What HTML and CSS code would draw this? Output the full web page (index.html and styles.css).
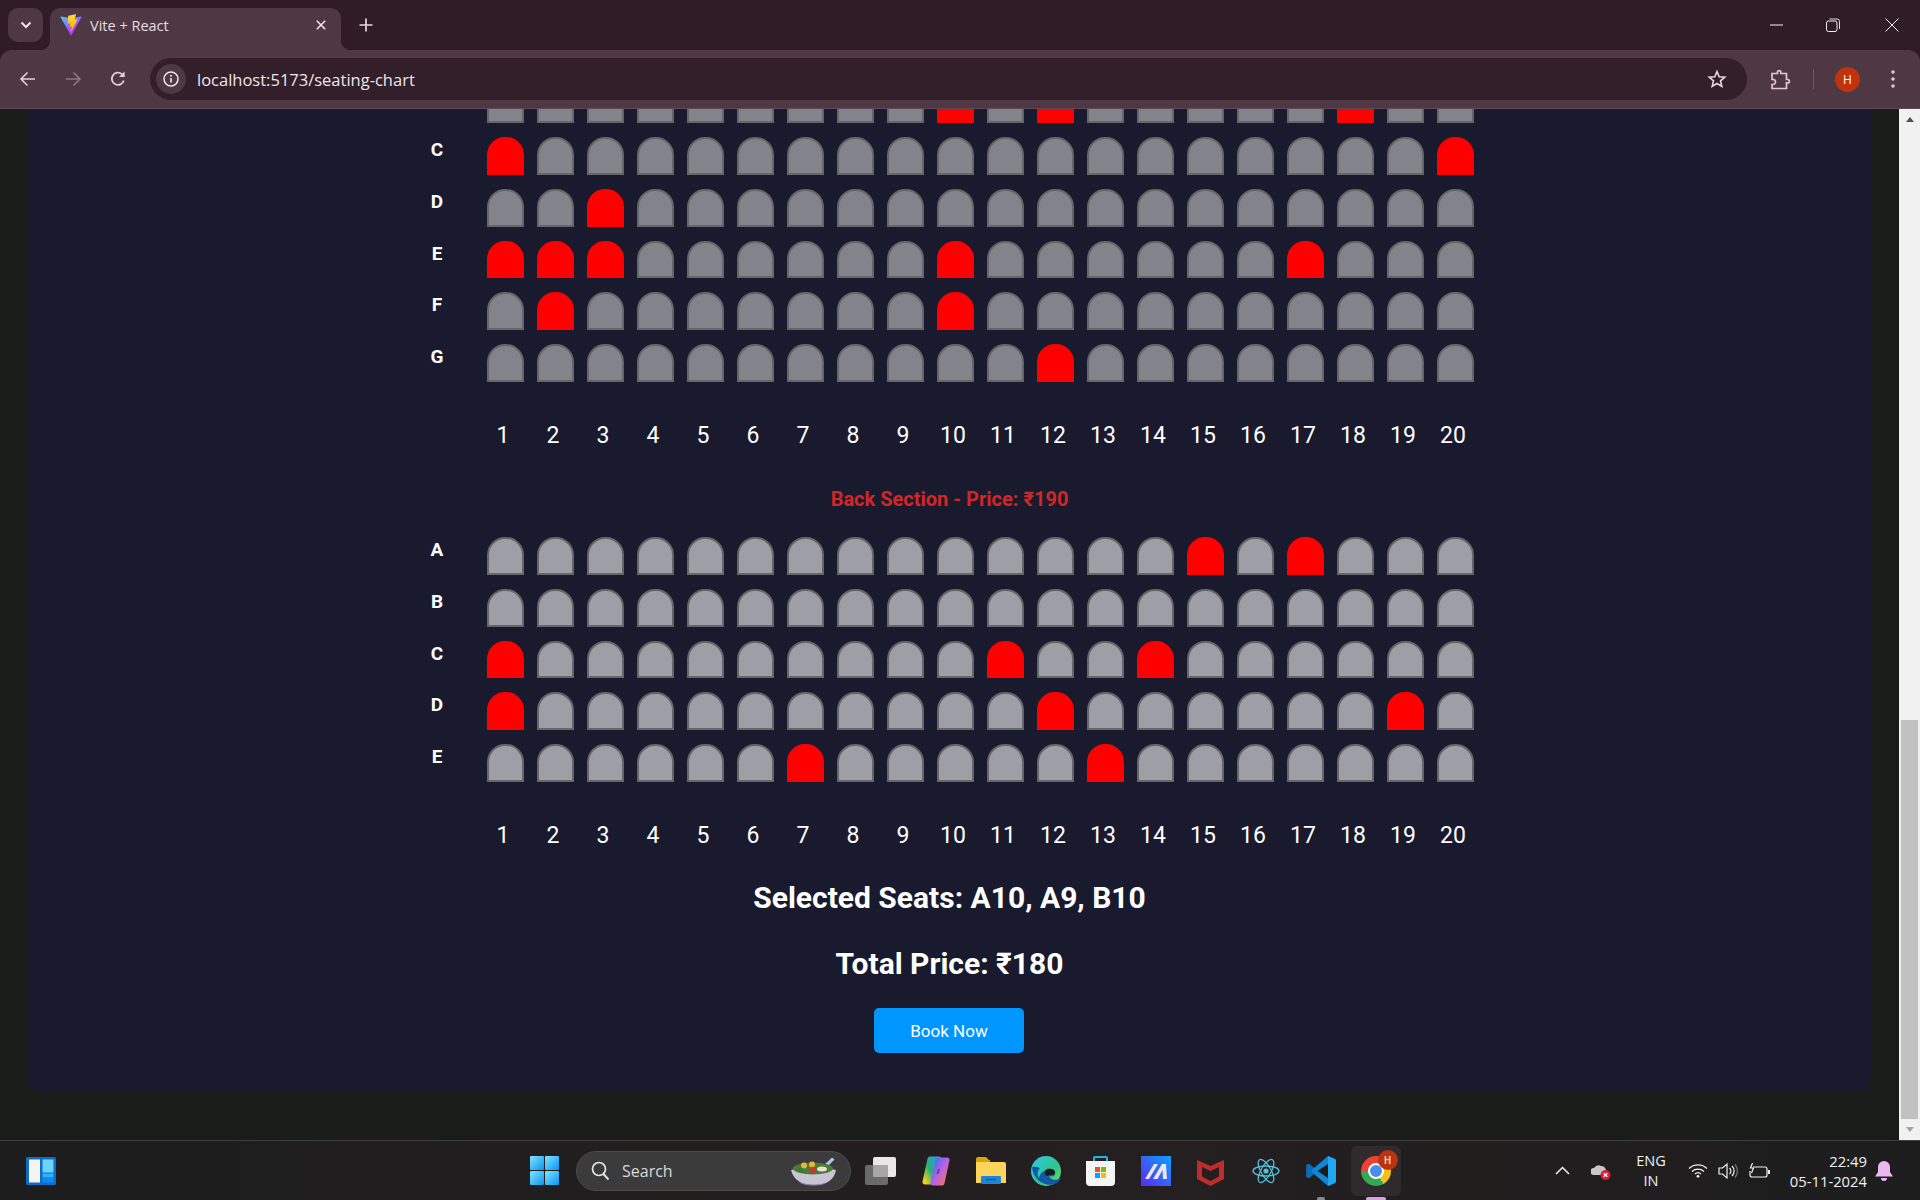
FILE: index.html
```html
<!DOCTYPE html>
<html lang="en">
<head>
<meta charset="utf-8">
<title>Vite + React</title>
<link rel="stylesheet" href="styles.css">
</head>
<body>
<header class="browser">
  <div class="tabstrip">
    <div class="tab-search"><svg width="12" height="8" viewBox="0 0 12 8"><path d="M1.5 1.5 6 6l4.5-4.5" fill="none" stroke="#f0e4ea" stroke-width="2"/></svg></div>
    <div class="tab">
      <svg class="favicon" width="22" height="22" viewBox="0 0 410 404"><defs><linearGradient id="vg1" x1="6" y1="33" x2="235" y2="344" gradientUnits="userSpaceOnUse"><stop offset="0" stop-color="#41D1FF"/><stop offset="1" stop-color="#BD34FE"/></linearGradient><linearGradient id="vg2" x1="194" y1="8" x2="236" y2="300" gradientUnits="userSpaceOnUse"><stop offset="0" stop-color="#FFEA83"/><stop offset=".08" stop-color="#FFDD35"/><stop offset="1" stop-color="#FFA800"/></linearGradient></defs><path fill="url(#vg1)" d="M399.641 59.5246L215.643 388.545C211.844 395.338 202.084 395.378 198.228 388.618L10.5817 59.5563C6.38087 52.1896 12.6802 43.2665 21.0281 44.7586L205.223 77.6824C206.398 77.8924 207.601 77.8904 208.776 77.6763L389.119 44.8058C397.439 43.2894 403.768 52.1434 399.641 59.5246Z"/><path fill="url(#vg2)" d="M292.965 1.5744L156.801 28.2552C154.563 28.6937 152.906 30.5903 152.771 32.8664L144.395 174.33C144.198 177.662 147.258 180.248 150.51 179.498L188.42 170.749C191.967 169.931 195.172 173.055 194.443 176.622L183.18 231.775C182.422 235.487 185.907 238.661 189.532 237.56L212.947 230.446C216.577 229.344 220.065 232.527 219.297 236.242L201.398 322.875C200.278 328.294 207.486 331.249 210.492 326.603L212.5 323.5L323.454 102.072C325.312 98.3645 322.108 94.137 318.036 94.9228L279.014 102.454C275.347 103.161 272.227 99.746 273.262 96.1583L298.731 7.86689C299.767 4.27314 296.636 0.855181 292.965 1.5744Z"/></svg>
      <span class="tab-title">Vite + React</span>
      <svg class="tab-close" width="10" height="10" viewBox="0 0 10 10"><path d="M.8.8l8.4 8.4M9.2.8.8 9.2" stroke="#f0e4ea" stroke-width="1.6"/></svg>
    </div>
    <svg class="new-tab" width="14" height="14" viewBox="0 0 14 14"><path d="M7 .5v13M.5 7h13" stroke="#e8d8e0" stroke-width="1.7"/></svg>
    <div class="window-controls">
      <svg width="14" height="2" viewBox="0 0 14 2"><path d="M0 1h13" stroke="#f4f0f2" stroke-width="1"/></svg>
      <svg width="14" height="14" viewBox="0 0 14 14"><rect x=".5" y="3" width="10.5" height="10.5" rx="2" fill="none" stroke="#f4f0f2"/><path d="M3.5 1h7.5A2.5 2.5 0 0 1 13.500 3.500V11" fill="none" stroke="#f4f0f2" stroke-width=".9"/></svg>
      <svg class="win-close" width="14" height="14" viewBox="0 0 14 14"><path d="M.5.500l13 13M13.500.500l-13 13" stroke="#f4f0f2" stroke-width="1"/></svg>
    </div>
  </div>
  <div class="toolbar">
    <svg class="nav-icon" width="18" height="16" viewBox="0 0 18 16"><path d="M16 8H2.500M8.500 1.500 2 8l6.500 6.500" fill="none" stroke="#e3cfd9" stroke-width="1.600"/></svg>
    <svg class="nav-icon" width="18" height="16" viewBox="0 0 18 16"><path d="M2 8h13.500M9.500 1.500 16 8l-6.500 6.500" fill="none" stroke="#8c7781" stroke-width="1.600"/></svg>
    <svg class="nav-icon" width="18" height="18" viewBox="0 0 18 18"><path d="M14.800 10.500A6.100 6.100 0 1 1 13 4.200L15 6" fill="none" stroke="#e3cfd9" stroke-width="1.800"/><path d="M15.600 1.500v5.600H10" fill="#e3cfd9"/></svg>
    <div class="omnibox">
      <div class="site-info"><svg width="16" height="16" viewBox="0 0 16 16"><circle cx="8" cy="8" r="7" fill="none" stroke="#f0e4ea" stroke-width="1.500"/><path d="M8 7v4.500" stroke="#f0e4ea" stroke-width="1.700"/><circle cx="8" cy="4.800" r="1" fill="#f0e4ea"/></svg></div>
      <span class="url">localhost:5173/seating-chart</span>
      <svg class="star" width="20" height="20" viewBox="0 0 20 20"><path d="M10 2.500l2.200 5.200 5.600.5-4.300 3.700 1.300 5.500L10 14.500l-4.800 2.900 1.300-5.500L2.200 8.200l5.600-.5z" fill="none" stroke="#e8d8e0" stroke-width="1.600"/></svg>
    </div>
    <svg class="puzzle" width="21" height="21" viewBox="0 0 21 21"><path d="M2 4.500h5.500V3.300a1.700 1.700 0 0 1 3.400 0v1.200h5.600v6h1.200a1.700 1.700 0 0 1 0 3.400h-1.200v5.600H2V15.500h1a2.500 2.500 0 0 0 0-5H2z" fill="none" stroke="#e3c5d3" stroke-width="1.700"/></svg>
    <div class="toolbar-divider"></div>
    <div class="avatar">H</div>
    <svg class="kebab" width="4" height="18" viewBox="0 0 4 18"><circle cx="2" cy="2" r="1.800" fill="#e3c5d3"/><circle cx="2" cy="9" r="1.800" fill="#e3c5d3"/><circle cx="2" cy="16" r="1.800" fill="#e3c5d3"/></svg>
  </div>
</header>

<div class="viewport">
  <main class="scroll-area">
    <section class="card">
      <div class="row clipped"><span class="row-label"></span><div class="seats"><i class="seat"></i><i class="seat"></i><i class="seat"></i><i class="seat"></i><i class="seat"></i><i class="seat"></i><i class="seat"></i><i class="seat"></i><i class="seat"></i><i class="seat taken"></i><i class="seat"></i><i class="seat taken"></i><i class="seat"></i><i class="seat"></i><i class="seat"></i><i class="seat"></i><i class="seat"></i><i class="seat taken"></i><i class="seat"></i><i class="seat"></i></div></div>
      <div class="row"><span class="row-label">C</span><div class="seats"><i class="seat taken"></i><i class="seat"></i><i class="seat"></i><i class="seat"></i><i class="seat"></i><i class="seat"></i><i class="seat"></i><i class="seat"></i><i class="seat"></i><i class="seat"></i><i class="seat"></i><i class="seat"></i><i class="seat"></i><i class="seat"></i><i class="seat"></i><i class="seat"></i><i class="seat"></i><i class="seat"></i><i class="seat"></i><i class="seat taken"></i></div></div>
      <div class="row"><span class="row-label">D</span><div class="seats"><i class="seat"></i><i class="seat"></i><i class="seat taken"></i><i class="seat"></i><i class="seat"></i><i class="seat"></i><i class="seat"></i><i class="seat"></i><i class="seat"></i><i class="seat"></i><i class="seat"></i><i class="seat"></i><i class="seat"></i><i class="seat"></i><i class="seat"></i><i class="seat"></i><i class="seat"></i><i class="seat"></i><i class="seat"></i><i class="seat"></i></div></div>
      <div class="row"><span class="row-label">E</span><div class="seats"><i class="seat taken"></i><i class="seat taken"></i><i class="seat taken"></i><i class="seat"></i><i class="seat"></i><i class="seat"></i><i class="seat"></i><i class="seat"></i><i class="seat"></i><i class="seat taken"></i><i class="seat"></i><i class="seat"></i><i class="seat"></i><i class="seat"></i><i class="seat"></i><i class="seat"></i><i class="seat taken"></i><i class="seat"></i><i class="seat"></i><i class="seat"></i></div></div>
      <div class="row"><span class="row-label">F</span><div class="seats"><i class="seat"></i><i class="seat taken"></i><i class="seat"></i><i class="seat"></i><i class="seat"></i><i class="seat"></i><i class="seat"></i><i class="seat"></i><i class="seat"></i><i class="seat taken"></i><i class="seat"></i><i class="seat"></i><i class="seat"></i><i class="seat"></i><i class="seat"></i><i class="seat"></i><i class="seat"></i><i class="seat"></i><i class="seat"></i><i class="seat"></i></div></div>
      <div class="row"><span class="row-label">G</span><div class="seats"><i class="seat"></i><i class="seat"></i><i class="seat"></i><i class="seat"></i><i class="seat"></i><i class="seat"></i><i class="seat"></i><i class="seat"></i><i class="seat"></i><i class="seat"></i><i class="seat"></i><i class="seat taken"></i><i class="seat"></i><i class="seat"></i><i class="seat"></i><i class="seat"></i><i class="seat"></i><i class="seat"></i><i class="seat"></i><i class="seat"></i></div></div>
      <div class="numbers"><span>1</span><span>2</span><span>3</span><span>4</span><span>5</span><span>6</span><span>7</span><span>8</span><span>9</span><span>10</span><span>11</span><span>12</span><span>13</span><span>14</span><span>15</span><span>16</span><span>17</span><span>18</span><span>19</span><span>20</span></div>

      <h3 class="section-title">Back Section - Price: ₹190</h3>
      <div class="row back"><span class="row-label">A</span><div class="seats"><i class="seat"></i><i class="seat"></i><i class="seat"></i><i class="seat"></i><i class="seat"></i><i class="seat"></i><i class="seat"></i><i class="seat"></i><i class="seat"></i><i class="seat"></i><i class="seat"></i><i class="seat"></i><i class="seat"></i><i class="seat"></i><i class="seat taken"></i><i class="seat"></i><i class="seat taken"></i><i class="seat"></i><i class="seat"></i><i class="seat"></i></div></div>
      <div class="row back"><span class="row-label">B</span><div class="seats"><i class="seat"></i><i class="seat"></i><i class="seat"></i><i class="seat"></i><i class="seat"></i><i class="seat"></i><i class="seat"></i><i class="seat"></i><i class="seat"></i><i class="seat"></i><i class="seat"></i><i class="seat"></i><i class="seat"></i><i class="seat"></i><i class="seat"></i><i class="seat"></i><i class="seat"></i><i class="seat"></i><i class="seat"></i><i class="seat"></i></div></div>
      <div class="row back"><span class="row-label">C</span><div class="seats"><i class="seat taken"></i><i class="seat"></i><i class="seat"></i><i class="seat"></i><i class="seat"></i><i class="seat"></i><i class="seat"></i><i class="seat"></i><i class="seat"></i><i class="seat"></i><i class="seat taken"></i><i class="seat"></i><i class="seat"></i><i class="seat taken"></i><i class="seat"></i><i class="seat"></i><i class="seat"></i><i class="seat"></i><i class="seat"></i><i class="seat"></i></div></div>
      <div class="row back"><span class="row-label">D</span><div class="seats"><i class="seat taken"></i><i class="seat"></i><i class="seat"></i><i class="seat"></i><i class="seat"></i><i class="seat"></i><i class="seat"></i><i class="seat"></i><i class="seat"></i><i class="seat"></i><i class="seat"></i><i class="seat taken"></i><i class="seat"></i><i class="seat"></i><i class="seat"></i><i class="seat"></i><i class="seat"></i><i class="seat"></i><i class="seat taken"></i><i class="seat"></i></div></div>
      <div class="row back"><span class="row-label">E</span><div class="seats"><i class="seat"></i><i class="seat"></i><i class="seat"></i><i class="seat"></i><i class="seat"></i><i class="seat"></i><i class="seat taken"></i><i class="seat"></i><i class="seat"></i><i class="seat"></i><i class="seat"></i><i class="seat"></i><i class="seat taken"></i><i class="seat"></i><i class="seat"></i><i class="seat"></i><i class="seat"></i><i class="seat"></i><i class="seat"></i><i class="seat"></i></div></div>
      <div class="numbers"><span>1</span><span>2</span><span>3</span><span>4</span><span>5</span><span>6</span><span>7</span><span>8</span><span>9</span><span>10</span><span>11</span><span>12</span><span>13</span><span>14</span><span>15</span><span>16</span><span>17</span><span>18</span><span>19</span><span>20</span></div>

      <h2 class="summary selected">Selected Seats: A10, A9, B10</h2>
      <h2 class="summary total">Total Price: ₹180</h2>
      <button class="book">Book Now</button>
    </section>
  </main>
  <aside class="scrollbar">
    <div class="sb-btn"><span class="arrow-up"></span></div>
    <div class="sb-track"><div class="sb-thumb"></div></div>
    <div class="sb-btn"><span class="arrow-down"></span></div>
  </aside>
</div>

<footer class="taskbar">
  <svg class="widgets" width="30" height="28" viewBox="0 0 30 28"><rect width="30" height="28" rx="1.500" fill="#0f6cc4"/><rect x="3" y="2.500" width="11" height="23" fill="#f4f4f4"/><rect x="16.500" y="2.500" width="11" height="13" fill="#6ad4ff"/><rect x="16.500" y="16.500" width="11" height="4" fill="#30b0ff"/><rect x="16.500" y="21" width="11" height="4.500" fill="#0a8cf0"/></svg>
  <div class="task-center">
    <svg class="win" width="29" height="29" viewBox="0 0 29 29"><defs><linearGradient id="wg" x1="0" y1="0" x2="1" y2="1"><stop offset="0" stop-color="#7fe4ff"/><stop offset="1" stop-color="#0c93f2"/></linearGradient></defs><rect x="0" y="0" width="14" height="14" rx="1" fill="url(#wg)"/><rect x="15" y="0" width="14" height="14" rx="1" fill="url(#wg)"/><rect x="0" y="15" width="14" height="14" rx="1" fill="url(#wg)"/><rect x="15" y="15" width="14" height="14" rx="1" fill="url(#wg)"/></svg>
    <div class="search">
      <svg width="19" height="20" viewBox="0 0 19 20"><circle cx="8" cy="8" r="6.500" fill="none" stroke="#e6e6e6" stroke-width="1.700"/><path d="M12.500 13l5 5.500" stroke="#e6e6e6" stroke-width="1.900"/></svg>
      <span class="search-label">Search</span>
      <svg class="bowl" width="47" height="30" viewBox="0 0 47 30"><path d="M29 14 42 1.500l2.500 2L33 15z" fill="#a9c8ee"/><path d="M1 14q22-7 45 0-3 15-22 15T1 14z" fill="#c8c4d6"/><path d="M8 26q16 5 30 0-7 4-15 3.500-9 0-15-3.500z" fill="#8f8aa6"/><ellipse cx="23" cy="12.500" rx="20" ry="6" fill="#4e7a35"/><circle cx="14" cy="9.500" r="3" fill="#e9b63a"/><circle cx="22" cy="8.500" r="3" fill="#e9b63a"/><circle cx="23" cy="14" r="3" fill="#c4392c"/><ellipse cx="32" cy="13" rx="5" ry="2.500" fill="#e9dfd8"/><circle cx="11" cy="14" r="2.500" fill="#2f7d3c"/></svg>
    </div>
    <div class="task-icons">
      <div class="task-item"><svg width="31" height="28" viewBox="0 0 31 28"><rect x="0" y="8" width="23" height="20" rx="2" fill="#6a6a6a"/><rect x="8" y="0" width="23" height="20" rx="2" fill="#e8e8e8"/><rect x="8" y="8" width="15" height="12" fill="#a6a6a6"/></svg></div>
      <div class="task-item"><svg width="30" height="30" viewBox="0 0 30 30"><defs><linearGradient id="cp1" x1="0" y1="1" x2="1" y2="0"><stop offset="0" stop-color="#f0d020"/><stop offset=".45" stop-color="#28b070"/><stop offset="1" stop-color="#2aa0f0"/></linearGradient><linearGradient id="cp2" x1="0" y1="0" x2="1" y2="1"><stop offset="0" stop-color="#3a70f0"/><stop offset=".5" stop-color="#b860e8"/><stop offset="1" stop-color="#f07850"/></linearGradient></defs><path d="M9 3h9l-5 23H4z" fill="url(#cp1)" stroke="url(#cp1)" stroke-width="5" stroke-linejoin="round"/><path d="M17 4h9l-5 23h-9z" fill="url(#cp2)" stroke="url(#cp2)" stroke-width="5" stroke-linejoin="round"/><path d="M17 13h2l-1.500 5h-2z" fill="#1c1c1c" opacity=".5"/></svg></div>
      <div class="task-item"><svg width="30" height="27" viewBox="0 0 30 27"><path d="M0 2q0-2 2-2h8l3 3h1v6H0z" fill="#d9a408"/><path d="M0 5h28q2 0 2 2v19H0z" fill="#fcd45c"/><rect x="5" y="19" width="20" height="8" rx="1" fill="#1e86d8"/><path d="M10 22.500h10" stroke="#0b5aa6" stroke-width="1.500"/></svg></div>
      <div class="task-item"><svg width="30" height="30" viewBox="0 0 30 30"><defs><linearGradient id="eg1" x1="0" y1="0" x2="1" y2="1"><stop offset="0" stop-color="#30c8e8"/><stop offset=".6" stop-color="#2fc48c"/><stop offset="1" stop-color="#7ee04c"/></linearGradient></defs><circle cx="15" cy="15" r="15" fill="url(#eg1)"/><path d="M1 12c2 12 12 19 23 16 4-2 5-4 6-6-5 3-11 2-12-2 5 1 7-1 6-4-4-4-14-3-16 6-2-2-2-7 1-10C5 11 2 10 1 12z" fill="#0f5aa8"/><path d="M16 20a4 4 0 0 1 0-7c3-1 8 0 8 3 0 3-3 3-5 3z" fill="#1a1c1a"/></svg></div>
      <div class="task-item"><svg width="29" height="30" viewBox="0 0 29 30"><path d="M8 5V2q0-1 1-1h11q1 0 1 1v3" fill="none" stroke="#2ab0e8" stroke-width="2"/><path d="M0 5h29v21q0 4-4 4H4q-4 0-4-4z" fill="#f4f4f4"/><rect x="9" y="11" width="5" height="5" fill="#f25022"/><rect x="15" y="11" width="5" height="5" fill="#7fba00"/><rect x="9" y="17" width="5" height="5" fill="#00a4ef"/><rect x="15" y="17" width="5" height="5" fill="#ffb900"/></svg></div>
      <div class="task-item"><svg width="30" height="30" viewBox="0 0 30 30"><defs><linearGradient id="mg" x1="0" y1="1" x2="1" y2="0"><stop offset="0" stop-color="#5a28f0"/><stop offset="1" stop-color="#10a0ff"/></linearGradient></defs><rect width="30" height="30" fill="url(#mg)"/><path d="M4 23 13 8h4L8 23zM12 23 21 8h4l1 15h-4l-.5-9-5 9z" fill="#e8e6ff"/></svg></div>
      <div class="task-item"><svg width="27" height="30" viewBox="0 0 27 30"><path d="M0 4 13.500 10 27 4v19L13.500 30 0 23zM5 11v9.500l8.500 4.500 8.500-4.500V11l-8.500 4z" fill="#c02c2c" fill-rule="evenodd"/></svg></div>
      <div class="task-item"><svg width="28" height="26" viewBox="0 0 28 26"><g fill="none" stroke="#53c1de" stroke-width="1.300"><ellipse cx="14" cy="13" rx="13" ry="5"/><ellipse cx="14" cy="13" rx="13" ry="5" transform="rotate(60 14 13)"/><ellipse cx="14" cy="13" rx="13" ry="5" transform="rotate(120 14 13)"/></g><circle cx="14" cy="13" r="2.600" fill="#53c1de"/></svg></div>
      <div class="task-item running"><svg width="30" height="30" viewBox="0 0 30 30"><path d="M22 0l7 3q1 .5 1 2v20q0 1.500-1 2l-7 3-14-12-5 4-2.500-1V9L3 8l5 4z" fill="#0f86d8"/><path d="M22 0l7 3q1 .5 1 2v20q0 1.500-1 2l-7 3z" fill="#22a6f0"/><path d="M22 8 11.500 15 22 22z" fill="#1a1c1a"/><path d="M3 8l5 4-3 3 3 3-5 4-2.500-1V9z" fill="#0a6cb8"/></svg><span class="indicator"></span></div>
      <div class="task-item active"><div class="chrome-logo"><div class="chrome-dot"></div></div><span class="chrome-badge">H</span><span class="indicator pink"></span></div>
    </div>
  </div>
  <div class="tray">
    <svg width="15" height="9" viewBox="0 0 15 9"><path d="M1 8l6.500-6.500L14 8" fill="none" stroke="#f0f0f0" stroke-width="1.500"/></svg>
    <div class="cloud"><svg width="20" height="20" viewBox="0 0 20 20"><path d="M3 14a3.500 3.500 0 0 1 0-7q3-4 7-2 4 0 5 4v5z" fill="#c8c8c8"/><circle cx="14.500" cy="14" r="5" fill="#d81e3a"/><path d="M12.700 12.200l3.600 3.600m0-3.600-3.600 3.600" stroke="#fff" stroke-width="1.300"/></svg></div>
    <div class="lang"><span>ENG</span><span>IN</span></div>
    <svg width="20" height="15" viewBox="0 0 20 15"><g fill="none" stroke="#f0f0f0" stroke-width="1.300"><path d="M1 5.500a13 13 0 0 1 18 0"/><path d="M4 8.500a9 9 0 0 1 12 0"/><path d="M7 11a4.500 4.500 0 0 1 6 0"/></g><circle cx="10" cy="13.300" r="1.400" fill="#f0f0f0"/></svg>
    <svg class="tray-vol" width="20" height="18" viewBox="0 0 20 18"><path d="M1 6h3.500L9 2v14l-4.500-4H1z" fill="none" stroke="#f0f0f0" stroke-width="1.200"/><path d="M11.500 6a4 4 0 0 1 0 6M14 4a7 7 0 0 1 0 10" fill="none" stroke="#f0f0f0" stroke-width="1.200"/><path d="M17 2.500a10 10 0 0 1 0 13" fill="none" stroke="#777" stroke-width="1.200"/></svg>
    <svg class="tray-bat" width="21" height="16" viewBox="0 0 21 16"><path d="M4 4h12q2 0 2 2v6q0 2-2 2H3q-2 0-2-2V8" fill="none" stroke="#f0f0f0" stroke-width="1.200"/><rect x="19" y="7" width="2" height="4" fill="#f0f0f0"/><path d="M3.500 0 1.500 5h3l-2 5" fill="none" stroke="#f0f0f0" stroke-width="1.200"/></svg>
    <div class="clock"><span>22:49</span><span>05-11-2024</span></div>
    <svg class="tray-bell" width="18" height="20" viewBox="0 0 18 20"><path d="M9 0a6 6 0 0 1 6 6v5l3 4.500H0L3 11V6a6 6 0 0 1 6-6z" fill="#eab8ee"/><path d="M6 17h6a3 3 0 0 1-6 0z" fill="#eab8ee"/></svg>
  </div>
</footer>
</body>
</html>
```

FILE: styles.css
```css
* { box-sizing: border-box; }
html, body { margin: 0; padding: 0; height: 1200px; overflow: hidden; }
body { display: flex; flex-direction: column; background: #1a1c1a; font-family: Roboto, sans-serif; color: #fff; }

/* browser chrome */
.browser { flex: none; height: 109px; background: #2f1c27; display: flex; flex-direction: column; font-family: "Open Sans", "Noto Sans", sans-serif; }
.tabstrip { height: 50px; display: flex; align-items: flex-end; padding-left: 8px; }
.tab-search { width: 35px; height: 34px; margin-bottom: 8px; background: #4d3843; border-radius: 10px; display: flex; align-items: center; justify-content: center; }
.tab { position: relative; width: 291px; height: 42px; margin-left: 7px; background: #4d3843; border-radius: 10px 10px 0 0; display: flex; align-items: center; padding: 0 0 8px 10px; }
.tab::before, .tab::after { content: ""; position: absolute; bottom: 0; width: 10px; height: 10px; }
.tab::before { left: -10px; background: radial-gradient(circle at 0 0, transparent 10px, #4d3843 10.5px); }
.tab::after { right: -10px; background: radial-gradient(circle at 100% 0, transparent 10px, #4d3843 10.5px); }
.favicon { flex: none; }
.tab-title { margin-left: 8px; font-size: 14.5px; color: #e8dce2; }
.tab-close { margin-left: auto; margin-right: 15px; }
.new-tab { margin: 0 0 18px 18px; }
.window-controls { margin-left: auto; display: flex; align-items: center; gap: 42px; height: 50px; padding-right: 21px; }
.win-close { margin-left: 3px; }
.toolbar { height: 59px; background: #4d3843; border-radius: 12px 12px 0 0; border-bottom: 1px solid #5e4a55; display: flex; align-items: center; padding-left: 19px; }
.nav-icon { flex: none; margin-right: 27px; }
.nav-icon:nth-child(3) { margin-right: 23px; }
.omnibox { flex: none; width: 1597px; height: 42px; border-radius: 21px; background: #331f2a; display: flex; align-items: center; padding: 0 20px 0 6px; }
.site-info { width: 30px; height: 30px; border-radius: 50%; background: #4d3843; display: flex; align-items: center; justify-content: center; }
.url { margin-left: 11px; font-size: 16.500px; color: #f0e4ea; }
.star { margin-left: auto; }
.puzzle { flex: none; margin-left: 23px; }
.toolbar-divider { width: 1px; height: 20px; background: #6e5a65; margin-left: 22px; }
.avatar { width: 25px; height: 25px; margin-left: 21px; border-radius: 50%; background: #c0330c; color: #fff; font-size: 12px; display: flex; align-items: center; justify-content: center; }
.kebab { margin-left: 31px; }

/* page */
.viewport { flex: none; height: 1031px; display: flex; }
.scroll-area { flex: 1; min-width: 0; overflow: hidden; }
.card { margin: 0 28px; height: 982px; background: #191a2e; border-radius: 0 0 12px 12px; display: flex; flex-direction: column; align-items: center; }
.row { width: 1064px; display: flex; align-items: flex-start; margin-bottom: 14px; flex: none; }
.row.clipped { height: 14px; overflow: hidden; align-items: flex-end; }
.row-label { flex: none; width: 39px; margin-right: 30.5px; text-align: center; font-size: 19px; font-weight: 700; line-height: 25px; }
.seats { display: flex; gap: 13px; flex: none; }
.seat { display: block; flex: none; width: 37px; height: 37.8px; background: #83838c; border: 2px solid #666; border-radius: 18px 18px 0 0; }
.back .seat { background: #9e9ea6; }
.seat.taken, .back .seat.taken { background: #f00; border-color: #f00; }
.numbers { flex: none; width: 1064px; height: 28px; margin-top: 26.5px; padding-left: 60.5px; display: flex; font-size: 23px; line-height: 28px; }
.numbers span { width: 50px; flex: none; text-align: center; }
.section-title { margin: 36.5px 0 26px; font-size: 20px; line-height: 24px; font-weight: 700; color: #d32626; }
.summary { margin: 0; font-size: 30px; line-height: 36px; font-weight: 700; }
.selected { margin-top: 30px; }
.total { margin-top: 30px; }
.book { margin: 26px 1px 0 0; width: 150px; height: 45px; border: 0; border-radius: 5px; background: #0096ff; color: #fff; font-family: Roboto, sans-serif; font-size: 17px; }

/* scrollbar */
.scrollbar { flex: none; width: 21px; background: #f1f1f1; display: flex; flex-direction: column; }
.sb-btn { height: 21px; display: flex; align-items: center; justify-content: center; flex: none; }
.arrow-up { width: 0; height: 0; border: 4.500px solid transparent; border-top: 0; border-bottom: 5px solid #505050; }
.arrow-down { width: 0; height: 0; border: 4.500px solid transparent; border-bottom: 0; border-top: 5px solid #a3a3a3; }
.sb-track { flex: 1; display: flex; flex-direction: column; justify-content: flex-end; }
.sb-thumb { height: 399px; margin: 0 2px; background: #c1c1c1; }

/* taskbar */
.taskbar { flex: none; height: 60px; background: linear-gradient(90deg, #1d1d1d, #241f20 60%, #1d1d1d); border-top: 1px solid #3e3e3e; display: flex; align-items: center; padding-left: 26px; font-family: "Open Sans", "Noto Sans", sans-serif; }
.widgets { flex: none; }
.task-center { display: flex; align-items: center; margin-left: 474px; }
.win { flex: none; }
.search { width: 275px; height: 40px; margin-left: 17px; border-radius: 20px; background: #3b3b3b; border: 1px solid #4a4a4a; display: flex; align-items: center; padding: 0 13px 0 14px; }
.search-label { margin-left: 12px; font-size: 16px; color: #d8d8d8; }
.bowl { margin-left: auto; }
.task-icons { display: flex; margin-left: 2px; }
.task-item { position: relative; width: 55px; height: 50px; display: flex; align-items: center; justify-content: center; }
.task-item.active { background: #302a2c; border-radius: 6px; width: 50px; margin: 0 2.500px; }
.indicator { position: absolute; left: 50%; bottom: -5px; width: 8px; height: 4px; margin-left: -4px; border-radius: 2px; background: #8a8a8a; }
.indicator.pink { width: 20px; margin-left: -10px; background: #d9a0e6; }
.chrome-logo { width: 30px; height: 30px; border-radius: 50%; background: conic-gradient(from 30deg, #f2c21a 0 120deg, #34a853 120deg 240deg, #ea4335 240deg 360deg); display: flex; align-items: center; justify-content: center; }
.chrome-dot { width: 16px; height: 16px; border-radius: 50%; background: #4a8cf0; border: 2px solid #fff; }
.chrome-badge { position: absolute; top: 4px; right: 3px; width: 20px; height: 20px; border-radius: 50%; background: #b9330f; color: #e8c8b8; font-size: 10px; font-weight: 700; display: flex; align-items: center; justify-content: center; }
.tray { display: flex; align-items: center; margin-left: 152px; }
.cloud { margin-left: 21px; display: flex; }
.lang { width: 40px; margin: 0 17px 0 20px; display: flex; flex-direction: column; align-items: center; font-size: 14.500px; line-height: 20px; color: #f0f0f0; }
.tray-vol { margin-left: 10px; }
.tray-bat { margin-left: 11px; }
.clock { width: 100px; margin-left: -3px; display: flex; flex-direction: column; align-items: flex-end; font-size: 14.800px; line-height: 20px; color: #f0f0f0; }
.tray-bell { margin-left: 8px; }
```
